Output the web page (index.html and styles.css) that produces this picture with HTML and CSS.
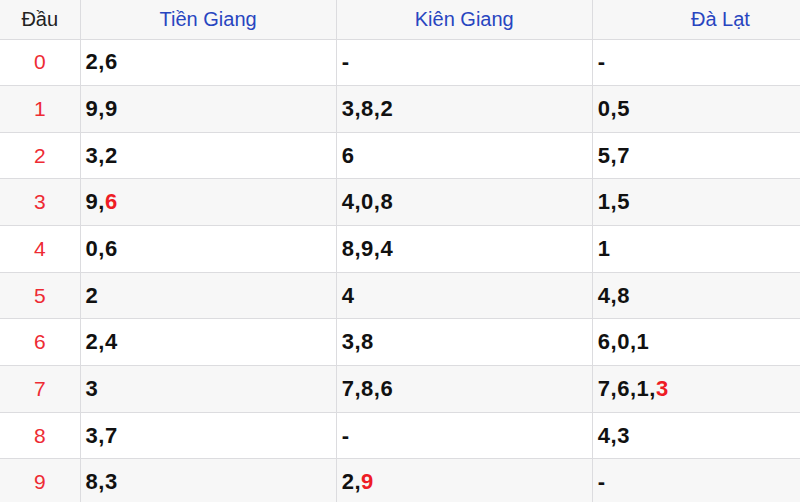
FILE: index.html
```html
<!DOCTYPE html>
<html lang="vi">
<head>
<meta charset="utf-8">
<title>Lô tô</title>
<link rel="stylesheet" href="styles.css">
</head>
<body>
<table class="loto">
  <colgroup>
    <col class="c-head">
    <col class="c-prov">
    <col class="c-prov">
    <col class="c-prov">
  </colgroup>
  <thead>
    <tr>
      <th class="h-dau">Đầu</th>
      <th>Tiền Giang</th>
      <th>Kiên Giang</th>
      <th>Đà Lạt</th>
    </tr>
  </thead>
  <tbody>
    <tr><td class="dau">0</td><td>2,6</td><td>-</td><td>-</td></tr>
    <tr><td class="dau">1</td><td>9,9</td><td>3,8,2</td><td>0,5</td></tr>
    <tr><td class="dau">2</td><td>3,2</td><td>6</td><td>5,7</td></tr>
    <tr><td class="dau">3</td><td>9,<span class="hit">6</span></td><td>4,0,8</td><td>1,5</td></tr>
    <tr><td class="dau">4</td><td>0,6</td><td>8,9,4</td><td>1</td></tr>
    <tr><td class="dau">5</td><td>2</td><td>4</td><td>4,8</td></tr>
    <tr><td class="dau">6</td><td>2,4</td><td>3,8</td><td>6,0,1</td></tr>
    <tr><td class="dau">7</td><td>3</td><td>7,8,6</td><td>7,6,1,<span class="hit">3</span></td></tr>
    <tr><td class="dau">8</td><td>3,7</td><td>-</td><td>4,3</td></tr>
    <tr><td class="dau">9</td><td>8,3</td><td>2,<span class="hit">9</span></td><td>-</td></tr>
  </tbody>
</table>
</body>
</html>
```
FILE: styles.css
```css
html, body {
  margin: 0;
  padding: 0;
  background: #ffffff;
  overflow: hidden;
}

body {
  font-family: "Liberation Sans", Arial, sans-serif;
}

.loto {
  border-collapse: collapse;
  table-layout: fixed;
  width: 849px;
  margin: 0;
}

.c-head { width: 80px; }
.c-prov { width: 256px; }

.loto th,
.loto td {
  border: 1px solid #dcdcdf;
  padding: 0 5px;
  vertical-align: middle;
}

.loto tr > :first-child { border-left: none; }

.loto thead tr {
  height: 39px;
  background: #f7f7f7;
}

.loto th {
  border-top: none;
  font-weight: normal;
  font-size: 20px;
  color: #2845c0;
  text-align: center;
}

.loto th.h-dau {
  color: #222222;
}

.loto tbody tr {
  height: 46.67px;
}

.loto tbody tr:nth-child(even) {
  background: #f7f7f7;
}

.loto td {
  font-size: 22px;
  font-weight: bold;
  color: #111111;
  text-align: left;
  letter-spacing: 0.5px;
}

.loto td.dau {
  font-weight: normal;
  color: #ee2b34;
  text-align: center;
  font-size: 21px;
  letter-spacing: 0;
}

.hit {
  color: #ee1c25;
}
```
